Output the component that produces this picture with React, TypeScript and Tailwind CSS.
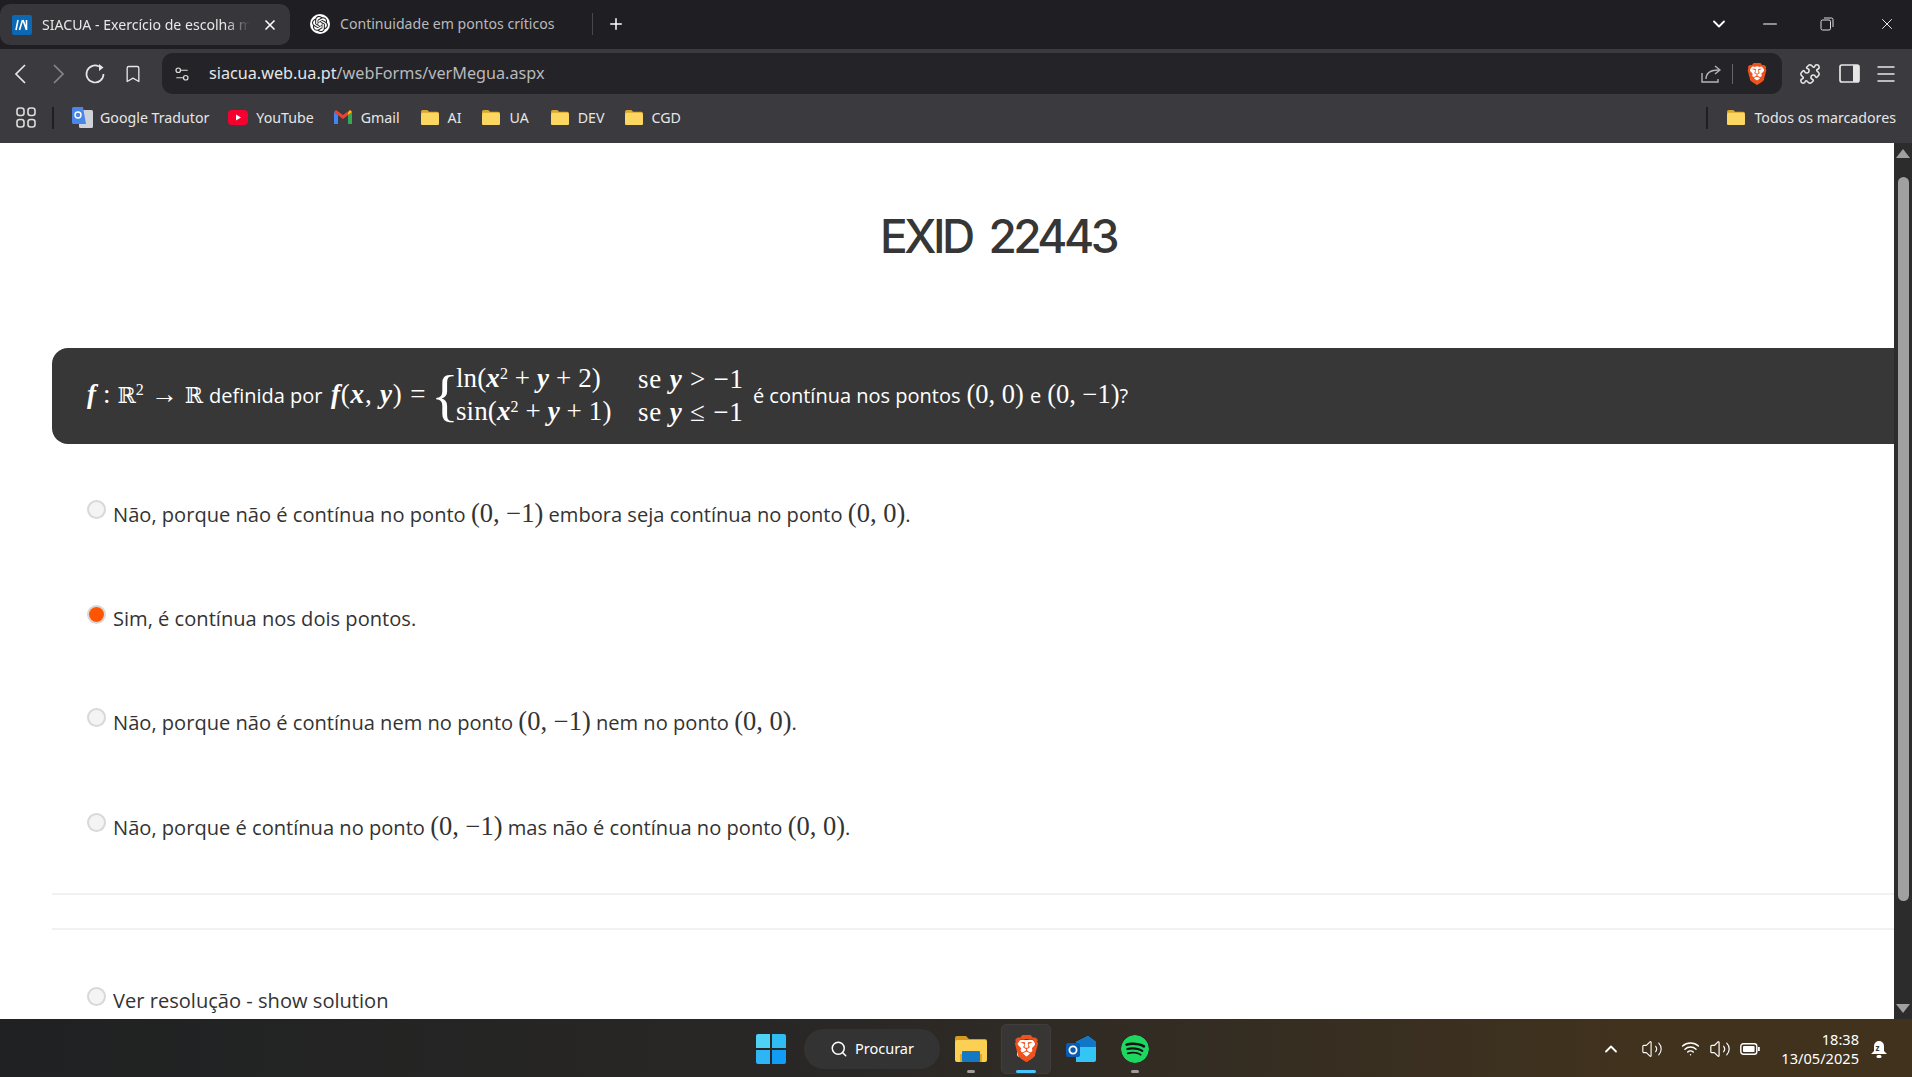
import { SiBrave, SiOpenai, SiSpotify } from "react-icons/si";
import {
  ChevronDown,
  ChevronUp,
  Bookmark,
  Menu,
  Minus,
  Plus,
  Puzzle,
  Search,
  Settings2,
  Volume2,
  Wifi,
  X,
} from "lucide-react";

const Folder = ({ size = 18 }: { size?: number }) => (
  <svg width={size} height={size * 0.85} viewBox="0 0 20 17">
    <path d="M0 2a2 2 0 0 1 2-2h5l2 2h9a2 2 0 0 1 2 2v1H0z" fill="#d9a72e" />
    <rect x="0" y="3" width="20" height="14" rx="2" fill="#fbd661" />
  </svg>
);

const BookmarkFolder = ({ label, className }: { label: string; className: string }) => (
  <div className={`flex items-center gap-[9px] ${className}`}>
    <Folder />
    <span>{label}</span>
  </div>
);

// brave glyph has a cut out lion, the white block behind fills it
const Brave = ({ size, className }: { size: number; className: string }) => (
  <span className={`relative flex items-center justify-center ${className}`}>
    <span className="absolute inset-[18%] rounded-[3px] bg-white" />
    <SiBrave size={size} className="relative text-[#f1511b]" />
  </span>
);

const M = ({ children }: { children: React.ReactNode }) => (
  <span className="font-['Liberation_Serif',serif] text-[26.5px] leading-none">{children}</span>
);

// the formula in the dark box runs a bit wider than the answers
const QM = ({ tight, children }: { tight?: boolean; children: React.ReactNode }) => (
  <span
    className={
      tight
        ? "font-['Liberation_Serif',serif] text-[27px] leading-none tracking-[0.1px]"
        : "font-['Liberation_Serif',serif] text-[27px] leading-none tracking-[0.8px]"
    }
  >
    {children}
  </span>
);

const I = ({ children }: { children: React.ReactNode }) => <i className="font-bold">{children}</i>;

const Sup = ({ children }: { children: React.ReactNode }) => (
  <span className="relative top-[-8px] text-[16px] leading-none">{children}</span>
);

const BB = () => <span className="font-['DejaVu_Serif',serif] text-[22px]">ℝ</span>;

const Point = ({ a, b }: { a: string; b: string }) => (
  <M>
    ({a}, {b})
  </M>
);

const Radio = ({ checked }: { checked?: boolean }) => (
  <span className="flex h-[19px] w-[19px] shrink-0 items-center justify-center rounded-full border-2 border-[#d8d8d8] bg-[#f4f4f4]">
    {checked && <span className="h-[15px] w-[15px] rounded-full bg-[#ff5500]" />}
  </span>
);

const Option = ({
  checked,
  className,
  children,
}: {
  checked?: boolean;
  className: string;
  children: React.ReactNode;
}) => (
  <div className={`ml-[87px] flex items-start gap-[7px] ${className}`}>
    <Radio checked={checked} />
    <div className="h-[28px] text-[20.1px] leading-[28px] text-[#333]">{children}</div>
  </div>
);

function TabBar() {
  return (
    <div className="flex h-[49px] items-center bg-[#1f1f23] pb-[2px] font-['Noto_Sans',sans-serif] text-[14.1px]">
      <div className="mt-[2px] flex h-[41px] w-[290px] items-center rounded-[10px] bg-[#36363b] pl-3 pr-[12px] text-[#e8e8e8]">
        <svg width="20" height="20" viewBox="0 0 20 20" className="shrink-0 rounded-[2px] bg-[#0a68b4]">
          <path d="M6 5L4 15M10.5 5L7.5 15M11 5l3.5 10M14.5 15V5" stroke="#fff" strokeWidth="1.6" fill="none" />
        </svg>
        <span className="ml-[10px] w-[208px] overflow-hidden whitespace-nowrap [mask-image:linear-gradient(to_right,black_88%,transparent)]">
          SIACUA - Exercício de escolha m
        </span>
        <X size={16} strokeWidth={2.5} className="ml-auto text-white" />
      </div>
      <span className="ml-[20px] flex h-[20px] w-[20px] items-center justify-center rounded-full bg-white">
        <SiOpenai size={16} className="text-[#222]" />
      </span>
      <span className="ml-[10px] w-[252px] text-[#b9b9bb]">Continuidade em pontos críticos</span>
      <span className="h-[22px] w-px bg-[#48484c]" />
      <Plus size={18} strokeWidth={2} className="ml-[14px] text-white" />
      <ChevronDown size={20} strokeWidth={2.2} className="ml-[1084px] text-white" />
      <Minus size={22} strokeWidth={1.1} className="ml-[30px] text-white" />
      <svg width="14" height="14" viewBox="0 0 14 14" fill="none" stroke="#ddd" className="ml-[39px]">
        <rect x="1" y="3" width="9.5" height="10" rx="1.5" />
        <path d="M4 1h7.5A1.5 1.5 0 0 1 13 2.5V10" />
      </svg>
      <X size={18} strokeWidth={1.2} className="ml-[44px] text-white" />
    </div>
  );
}

function Toolbar() {
  return (
    <div className="flex h-[49px] items-center bg-[#3a3a3f] text-[#e6e6e6]">
      <svg width="14" height="22" viewBox="0 0 14 22" fill="none" stroke="#e6e6e6" strokeWidth="1.7" className="ml-[13px]">
        <path d="M12 2L3 11l9 9" />
      </svg>
      <svg width="14" height="22" viewBox="0 0 14 22" fill="none" stroke="#85858a" strokeWidth="1.7" className="ml-[25px]">
        <path d="M2 2l9 9-9 9" />
      </svg>
      <svg width="22" height="22" viewBox="0 0 22 22" fill="none" stroke="#e6e6e6" strokeWidth="1.7" className="ml-[18px]">
        <path d="M15 3.5A8.5 8.5 0 1 0 19.5 11" />
        <path d="M15 1l4.5 3.5L15 8z" fill="#e6e6e6" stroke="none" />
      </svg>
      <Bookmark size={20} strokeWidth={1.6} className="ml-[17px]" />
      <div className="ml-[19px] flex h-[41px] w-[1620px] items-center rounded-[11px] bg-[#242428] font-['Noto_Sans',sans-serif] text-[16.2px]">
        <Settings2 size={18} strokeWidth={1.6} className="ml-[11px] text-[#ddd]" />
        <span className="ml-[18px] text-[#e6e6e6]">
          siacua.web.ua.pt<span className="text-[#b9b9bc]">/webForms/verMegua.aspx</span>
        </span>
        <svg width="20" height="20" viewBox="0 0 20 20" fill="none" stroke="#b5b5b8" strokeWidth="1.4" className="ml-auto">
          <path d="M1 9v9h16v-3" />
          <path d="M5 15c0-6 4-9 13-9" />
          <path d="M14 2l5 4-5 4" />
        </svg>
        <span className="ml-[11px] h-[20px] w-px bg-[#66666a]" />
        <Brave size={22} className="ml-[13px] mr-[14px]" />
      </div>
      <Puzzle size={22} strokeWidth={1.7} className="ml-[17px]" />
      <svg width="21" height="19" viewBox="0 0 21 19" className="ml-[18px]">
        <rect x="1" y="1" width="19" height="17" rx="2" fill="none" stroke="#e6e6e6" strokeWidth="1.7" />
        <rect x="14" y="1" width="6" height="17" rx="1" fill="#e6e6e6" />
      </svg>
      <Menu size={24} strokeWidth={1.5} className="ml-[14px]" />
    </div>
  );
}

function BookmarksBar() {
  return (
    <div className="flex h-[45px] items-center bg-[#3a3a3f] pb-[6px] font-['Noto_Sans',sans-serif] text-[14.2px] text-[#e6e6e6]">
      <svg width="20" height="21" viewBox="0 0 20 21" fill="none" stroke="#ddd" strokeWidth="1.6" className="ml-[16px]">
        <rect x="1" y="1" width="7" height="7.5" rx="2.5" />
        <rect x="12" y="1" width="7" height="7.5" rx="2.5" />
        <rect x="1" y="12.5" width="7" height="7.5" rx="2.5" />
        <rect x="12" y="12.5" width="7" height="7.5" rx="2.5" />
      </svg>
      <span className="ml-[16px] h-[22px] w-[2px] bg-[#1f1f22]" />
      <div className="ml-[18px] flex items-center gap-[7px]">
        <svg width="21" height="21" viewBox="0 0 21 21">
          <rect x="7" y="3" width="14" height="18" rx="1.5" fill="#cfd3d8" />
          <path d="M1.5 0H11l3 17H1.5A1.5 1.5 0 0 1 0 15.5v-14A1.5 1.5 0 0 1 1.5 0z" fill="#4a86e8" />
          <circle cx="6" cy="8" r="3" fill="none" stroke="#fff" strokeWidth="1.4" />
        </svg>
        <span>Google Tradutor</span>
      </div>
      <div className="ml-[19px] flex items-center gap-[8px]">
        <svg width="20" height="15" viewBox="0 0 20 15">
          <rect width="20" height="15" rx="4" fill="#f5002f" />
          <path d="M8 4.5l5 3-5 3z" fill="#fff" />
        </svg>
        <span>YouTube</span>
      </div>
      <div className="ml-[20px] flex items-center gap-[9px]">
        <svg width="18" height="14" viewBox="0 0 18 14">
          <path d="M0 2v12h4V5z" fill="#4285f4" />
          <path d="M14 5v9h4V2z" fill="#34a853" />
          <path d="M0 2l9 7 9-7-2-2-7 5-7-5z" fill="#ea4335" />
          <path d="M14 3l2-3 2 2-4 3z" fill="#fbbc05" />
        </svg>
        <span>Gmail</span>
      </div>
      <BookmarkFolder label="AI" className="ml-[21px]" />
      <BookmarkFolder label="UA" className="ml-[21px]" />
      <BookmarkFolder label="DEV" className="ml-[22px]" />
      <BookmarkFolder label="CGD" className="ml-[20px]" />
      <span className="ml-auto h-[22px] w-[2px] bg-[#1f1f22]" />
      <BookmarkFolder label="Todos os marcadores" className="ml-[19px] mr-[16px]" />
    </div>
  );
}

function Scrollbar() {
  return (
    <div className="flex w-[18px] shrink-0 flex-col items-center bg-[#2c2c2c]">
      <svg width="14" height="9" viewBox="0 0 14 9" className="mt-[6px]">
        <path d="M7 0l7 9H0z" fill="#a0a0a0" />
      </svg>
      <div className="mt-[19px] h-[724px] w-[11px] rounded-full bg-[#a0a0a0]" />
      <svg width="14" height="9" viewBox="0 0 14 9" className="mt-auto mb-[6px]">
        <path d="M7 9L0 0h14z" fill="#a0a0a0" />
      </svg>
    </div>
  );
}

function Question() {
  return (
    <div className="ml-[52px] mt-[73px] flex h-[96px] items-center rounded-l-[16px] bg-[#373737] pl-[35px] font-['Open_Sans',sans-serif] text-[20px] text-white">
      <span className="w-[122px] shrink-0 whitespace-nowrap">
        <QM tight>
          <I>f</I> : <BB />
          <Sup>2</Sup> → <BB />
        </QM>
      </span>
      <span className="w-[122px] shrink-0 whitespace-nowrap">definida por</span>
      <span className="w-[100px] shrink-0 whitespace-nowrap">
        <QM>
          <I>f</I>(<I>x</I>, <I>y</I>) =
        </QM>
      </span>
      <span className="w-[25px] shrink-0 font-['Liberation_Serif',serif] text-[58px] font-thin leading-none">{"{"}</span>
      <div className="flex flex-col">
        <div className="flex h-[33px] items-center">
          <span className="w-[182px] whitespace-nowrap">
            <QM tight>
              ln(<I>x</I>
              <Sup>2</Sup> + <I>y</I> + 2)
            </QM>
          </span>
          <QM>
            se <I>y</I> &gt; −1
          </QM>
        </div>
        <div className="flex h-[33px] items-center">
          <span className="w-[182px] whitespace-nowrap">
            <QM tight>
              sin(<I>x</I>
              <Sup>2</Sup> + <I>y</I> + 1)
            </QM>
          </span>
          <QM>
            se <I>y</I> ≤ −1
          </QM>
        </div>
      </div>
      <span className="ml-[9px]">é contínua nos pontos</span>
      <span className="ml-[6px]">
        <Point a="0" b="0" />
      </span>
      <span className="ml-[6px]">e</span>
      <span className="ml-[6px]">
        <Point a="0" b="−1" />
      </span>
      <span>?</span>
    </div>
  );
}

function Content() {
  return (
    <div className="flex min-w-0 flex-1 flex-col overflow-hidden bg-white">
      <h1 className="mt-[66px] h-[66px] pl-[102px] text-center font-['Inter',sans-serif] text-[46px] font-medium leading-[54px] tracking-[-3.5px] text-[#363636] [word-spacing:8px]">
        EXID 22443
      </h1>
      <Question />
      <div className="font-['Open_Sans',sans-serif]">
        <Option className="mt-[56px]">
          Não, porque não é contínua no ponto <Point a="0" b="−1" /> embora seja contínua no ponto{" "}
          <Point a="0" b="0" />.
        </Option>
        <Option checked className="mt-[77px]">
          Sim, é contínua nos dois pontos.
        </Option>
        <Option className="mt-[75px]">
          Não, porque não é contínua nem no ponto <Point a="0" b="−1" /> nem no ponto <Point a="0" b="0" />.
        </Option>
        <Option className="mt-[77px]">
          Não, porque é contínua no ponto <Point a="0" b="−1" /> mas não é contínua no ponto <Point a="0" b="0" />.
        </Option>
        <div className="ml-[52px] mt-[52px] border-t-2 border-[#f1f1f1]" />
        <div className="ml-[52px] mt-[33px] border-t-2 border-[#f1f1f1]" />
        <Option className="mt-[57px]">Ver resolução - show solution</Option>
      </div>
    </div>
  );
}

function Taskbar() {
  return (
    <div className="flex h-[58px] items-center bg-gradient-to-r from-[#1f2122] via-[#2a2826] via-45% to-[#40321d] to-85% pt-[1px] font-['Noto_Sans',sans-serif] text-white">
      <div className="ml-[756px] grid h-[30px] w-[30px] grid-cols-2 gap-[2px]">
        <span className="rounded-tl-[2px] bg-[#4fd3f5]" />
        <span className="rounded-tr-[2px] bg-[#2fbcf5]" />
        <span className="rounded-bl-[2px] bg-[#2fb5f5]" />
        <span className="rounded-br-[2px] bg-[#119df5]" />
      </div>
      <div className="ml-[18px] flex h-[40px] w-[136px] items-center justify-center gap-[7px] rounded-full bg-[#333333] text-[14.5px]">
        <Search size={18} strokeWidth={2} />
        Procurar
      </div>
      <div className="relative ml-[6px] flex h-[50px] w-[50px] items-center justify-center">
        <svg width="32" height="26" viewBox="0 0 32 26">
          <path d="M0 2a2 2 0 0 1 2-2h9l3 3h16a2 2 0 0 1 2 2v3H0z" fill="#d59a20" />
          <rect y="4" width="32" height="22" rx="2" fill="#fcd053" />
          <rect x="5" y="18" width="22" height="8" fill="#e3aa1f" />
          <rect x="7" y="15" width="18" height="11" rx="1" fill="#1578c4" />
        </svg>
        <span className="absolute bottom-[1px] h-[3px] w-[8px] rounded-full bg-[#9d9d9d]" />
      </div>
      <div className="relative ml-[5px] flex h-[50px] w-[50px] items-center justify-center rounded-[5px] border border-[#403d3b] bg-[#383634]">
        <Brave size={27} className="" />
        <span className="absolute bottom-0 h-[3px] w-[20px] rounded-full bg-[#4cc2ff]" />
      </div>
      <div className="ml-[5px] flex h-[50px] w-[50px] items-center justify-center">
        <svg width="30" height="26" viewBox="0 0 30 26">
          <path d="M10 6l12-6 8 6v18a2 2 0 0 1-2 2H10z" fill="#33c6f4" />
          <path d="M10 6l12-6 8 6v5H10z" fill="#0f76c8" />
          <rect y="7" width="14" height="14" rx="2" fill="#0a5cb0" />
          <circle cx="7" cy="14" r="3.6" fill="none" stroke="#fff" strokeWidth="1.8" />
        </svg>
      </div>
      <div className="relative ml-[4px] flex h-[50px] w-[50px] items-center justify-center">
        <SiSpotify size={28} className="rounded-full bg-[#111] text-[#1ed760]" />
        <span className="absolute bottom-[1px] h-[3px] w-[8px] rounded-full bg-[#9d9d9d]" />
      </div>
      <ChevronUp size={20} strokeWidth={2.2} className="ml-[441px]" />
      <Volume2 size={22} strokeWidth={1.2} className="ml-[20px]" />
      <Wifi size={19} strokeWidth={1.8} className="ml-[18px]" />
      <Volume2 size={22} strokeWidth={1.3} className="ml-[9px]" />
      <svg width="20" height="12" viewBox="0 0 20 12" className="ml-[9px]">
        <rect x="0.8" y="0.8" width="16" height="10.4" rx="2.5" fill="none" stroke="#fff" strokeWidth="1.4" />
        <rect x="3" y="3" width="11.6" height="6" rx="1" fill="#fff" />
        <rect x="18" y="4" width="1.8" height="4" fill="#fff" />
      </svg>
      <div className="ml-[11px] flex w-[88px] flex-col items-end text-[14.6px] leading-[19px]">
        <span>18:38</span>
        <span>13/05/2025</span>
      </div>
      <svg width="18" height="20" viewBox="0 0 18 20" className="ml-[11px]">
        <path d="M9 2a5 5 0 0 1 5 5v5l3 3H1l3-3V7a5 5 0 0 1 5-5z" fill="#fff" />
        <rect x="6.5" y="16" width="5" height="3" rx="1.5" fill="#fff" />
        <text x="5.5" y="12" fontSize="8" fontWeight="700" fill="#333">
          z
        </text>
      </svg>
    </div>
  );
}

export default function App() {
  return (
    <div className="flex h-[1077px] w-[1912px] flex-col overflow-hidden">
      <TabBar />
      <Toolbar />
      <BookmarksBar />
      <div className="flex h-[876px]">
        <Content />
        <Scrollbar />
      </div>
      <Taskbar />
    </div>
  );
}
